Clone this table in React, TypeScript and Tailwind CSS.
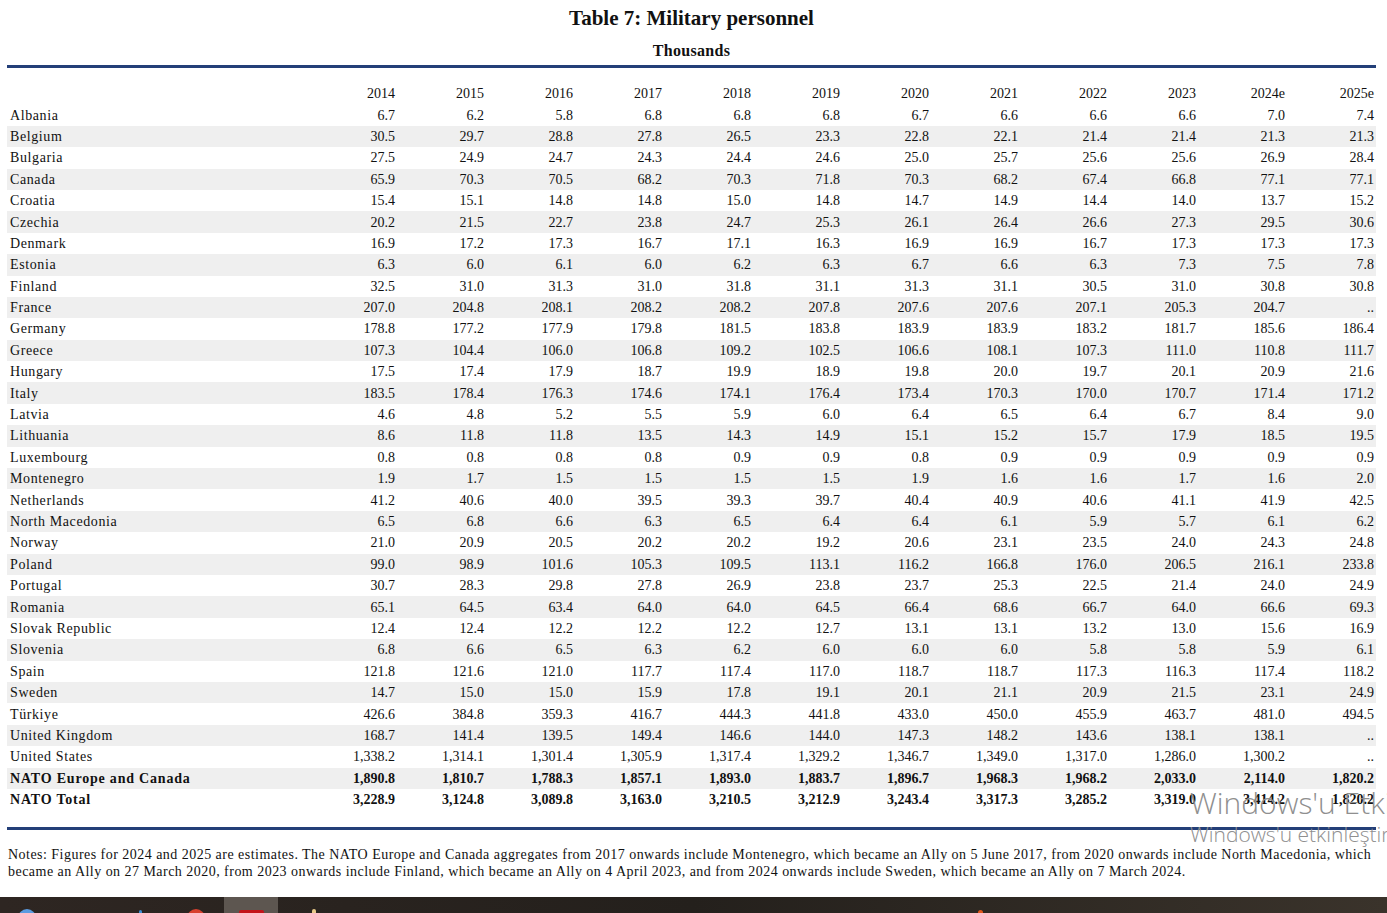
const years = ["2014", "2015", "2016", "2017", "2018", "2019", "2020", "2021", "2022", "2023", "2024e", "2025e"];

const rows: [string, string][] = [
  ["Albania", "6.7 6.2 5.8 6.8 6.8 6.8 6.7 6.6 6.6 6.6 7.0 7.4"],
  ["Belgium", "30.5 29.7 28.8 27.8 26.5 23.3 22.8 22.1 21.4 21.4 21.3 21.3"],
  ["Bulgaria", "27.5 24.9 24.7 24.3 24.4 24.6 25.0 25.7 25.6 25.6 26.9 28.4"],
  ["Canada", "65.9 70.3 70.5 68.2 70.3 71.8 70.3 68.2 67.4 66.8 77.1 77.1"],
  ["Croatia", "15.4 15.1 14.8 14.8 15.0 14.8 14.7 14.9 14.4 14.0 13.7 15.2"],
  ["Czechia", "20.2 21.5 22.7 23.8 24.7 25.3 26.1 26.4 26.6 27.3 29.5 30.6"],
  ["Denmark", "16.9 17.2 17.3 16.7 17.1 16.3 16.9 16.9 16.7 17.3 17.3 17.3"],
  ["Estonia", "6.3 6.0 6.1 6.0 6.2 6.3 6.7 6.6 6.3 7.3 7.5 7.8"],
  ["Finland", "32.5 31.0 31.3 31.0 31.8 31.1 31.3 31.1 30.5 31.0 30.8 30.8"],
  ["France", "207.0 204.8 208.1 208.2 208.2 207.8 207.6 207.6 207.1 205.3 204.7 .."],
  ["Germany", "178.8 177.2 177.9 179.8 181.5 183.8 183.9 183.9 183.2 181.7 185.6 186.4"],
  ["Greece", "107.3 104.4 106.0 106.8 109.2 102.5 106.6 108.1 107.3 111.0 110.8 111.7"],
  ["Hungary", "17.5 17.4 17.9 18.7 19.9 18.9 19.8 20.0 19.7 20.1 20.9 21.6"],
  ["Italy", "183.5 178.4 176.3 174.6 174.1 176.4 173.4 170.3 170.0 170.7 171.4 171.2"],
  ["Latvia", "4.6 4.8 5.2 5.5 5.9 6.0 6.4 6.5 6.4 6.7 8.4 9.0"],
  ["Lithuania", "8.6 11.8 11.8 13.5 14.3 14.9 15.1 15.2 15.7 17.9 18.5 19.5"],
  ["Luxembourg", "0.8 0.8 0.8 0.8 0.9 0.9 0.8 0.9 0.9 0.9 0.9 0.9"],
  ["Montenegro", "1.9 1.7 1.5 1.5 1.5 1.5 1.9 1.6 1.6 1.7 1.6 2.0"],
  ["Netherlands", "41.2 40.6 40.0 39.5 39.3 39.7 40.4 40.9 40.6 41.1 41.9 42.5"],
  ["North Macedonia", "6.5 6.8 6.6 6.3 6.5 6.4 6.4 6.1 5.9 5.7 6.1 6.2"],
  ["Norway", "21.0 20.9 20.5 20.2 20.2 19.2 20.6 23.1 23.5 24.0 24.3 24.8"],
  ["Poland", "99.0 98.9 101.6 105.3 109.5 113.1 116.2 166.8 176.0 206.5 216.1 233.8"],
  ["Portugal", "30.7 28.3 29.8 27.8 26.9 23.8 23.7 25.3 22.5 21.4 24.0 24.9"],
  ["Romania", "65.1 64.5 63.4 64.0 64.0 64.5 66.4 68.6 66.7 64.0 66.6 69.3"],
  ["Slovak Republic", "12.4 12.4 12.2 12.2 12.2 12.7 13.1 13.1 13.2 13.0 15.6 16.9"],
  ["Slovenia", "6.8 6.6 6.5 6.3 6.2 6.0 6.0 6.0 5.8 5.8 5.9 6.1"],
  ["Spain", "121.8 121.6 121.0 117.7 117.4 117.0 118.7 118.7 117.3 116.3 117.4 118.2"],
  ["Sweden", "14.7 15.0 15.0 15.9 17.8 19.1 20.1 21.1 20.9 21.5 23.1 24.9"],
  ["Türkiye", "426.6 384.8 359.3 416.7 444.3 441.8 433.0 450.0 455.9 463.7 481.0 494.5"],
  ["United Kingdom", "168.7 141.4 139.5 149.4 146.6 144.0 147.3 148.2 143.6 138.1 138.1 .."],
  ["United States", "1,338.2 1,314.1 1,301.4 1,305.9 1,317.4 1,329.2 1,346.7 1,349.0 1,317.0 1,286.0 1,300.2 .."],
  ["NATO Europe and Canada", "1,890.8 1,810.7 1,788.3 1,857.1 1,893.0 1,883.7 1,896.7 1,968.3 1,968.2 2,033.0 2,114.0 1,820.2"],
  ["NATO Total", "3,228.9 3,124.8 3,089.8 3,163.0 3,210.5 3,212.9 3,243.4 3,317.3 3,285.2 3,319.0 3,414.2 1,820.2"],
];

const App = () => {
  return (
    <div className="relative flex h-[913px] w-[1387px] flex-col overflow-hidden bg-white font-['Liberation_Serif',serif] text-[#111]">
      <div className="flex-1 pl-[7px] pr-[11px]">
        <h1 className="pt-[6px] text-center text-[21px] leading-[24px] font-bold">Table 7: Military personnel</h1>
        <div className="mt-[12px] text-center text-[16px] leading-[18px] font-bold tracking-[0.3px]">Thousands</div>
        <div className="mt-[5px] h-[3px] bg-[#233f78]" />

        <table className="mt-[15px] w-[1369px] table-fixed border-collapse text-[14px]">
          <colgroup>
            <col className="w-[301px]" />
            {years.map((y) => (
              <col key={y} className="w-[89px]" />
            ))}
          </colgroup>
          <thead>
            <tr className="h-[21.4px]">
              <th />
              {years.map((y) => (
                <th key={y} className="pr-[2px] text-right font-normal">
                  {y}
                </th>
              ))}
            </tr>
          </thead>
          <tbody>
            {rows.map(([name, vals], i) => {
              const bold = name.startsWith("NATO");
              return (
                <tr key={name} className={`h-[21.4px] ${i % 2 === 1 ? "bg-[#efefef]" : ""} ${bold ? "font-bold" : ""}`}>
                  <td className={`pl-[3px] text-left ${bold ? "tracking-[0.8px]" : "tracking-[0.6px]"}`}>{name}</td>
                  {vals.split(" ").map((v, j) => (
                    <td key={j} className="pr-[2px] text-right">
                      {v}
                    </td>
                  ))}
                </tr>
              );
            })}
          </tbody>
        </table>

        <div className="mt-[17px] h-[3px] bg-[#233f78]" />
        <p className="mt-[16px] pl-[1px] text-[14px] leading-[17px] tracking-[0.47px] whitespace-nowrap">
          Notes: Figures for 2024 and 2025 are estimates. The NATO Europe and Canada aggregates from 2017 onwards include Montenegro, which became an Ally on 5 June 2017, from 2020 onwards include North Macedonia, which
          <br />
          became an Ally on 27 March 2020, from 2023 onwards include Finland, which became an Ally on 4 April 2023, and from 2024 onwards include Sweden, which became an Ally on 7 March 2024.
        </p>
      </div>

      {/* windows activation watermark */}
      <div className="pointer-events-none absolute left-[1190px] top-[784px] font-['Open_Sans',sans-serif] font-light whitespace-nowrap text-[#8f8f8f]">
        <div className="text-[30px] leading-[38px]">Windows'u Etkinleştir</div>
        <div className="text-[21px] leading-[24px]">Windows'u etkinleştirmek için Ayarlar'a gidin.</div>
      </div>

      {/* taskbar, only its top edge shows */}
      <div className="flex h-[16px] w-full shrink-0 items-start overflow-hidden bg-gradient-to-r from-[#2e2622] via-[#24201c] to-[#3a332b] pt-[12px]">
        <div className="ml-[18px] h-[18px] w-[18px] shrink-0 rounded-full bg-[#5b9be0]" />
        <div className="ml-[103px] mt-[1px] h-[6px] w-[3px] shrink-0 rounded-full bg-[#3c8fd8]" />
        <div className="ml-[45px] h-[18px] w-[18px] shrink-0 rounded-full bg-[#d8412f]" />
        <div className="-mt-[12px] ml-[19px] flex h-[16px] w-[54px] shrink-0 justify-center bg-[#5d5650] pt-[13px]">
          <div className="h-[10px] w-[25px] rounded-[2px] bg-[#c4141a]" />
        </div>
        <div className="ml-[34px] h-[6px] w-[4px] shrink-0 rounded-full bg-[#e8c98a]" />
        <div className="ml-[662px] mt-[1px] h-[5px] w-[5px] shrink-0 rounded-full bg-[#e2571c]" />
      </div>
    </div>
  );
};

export default App;
